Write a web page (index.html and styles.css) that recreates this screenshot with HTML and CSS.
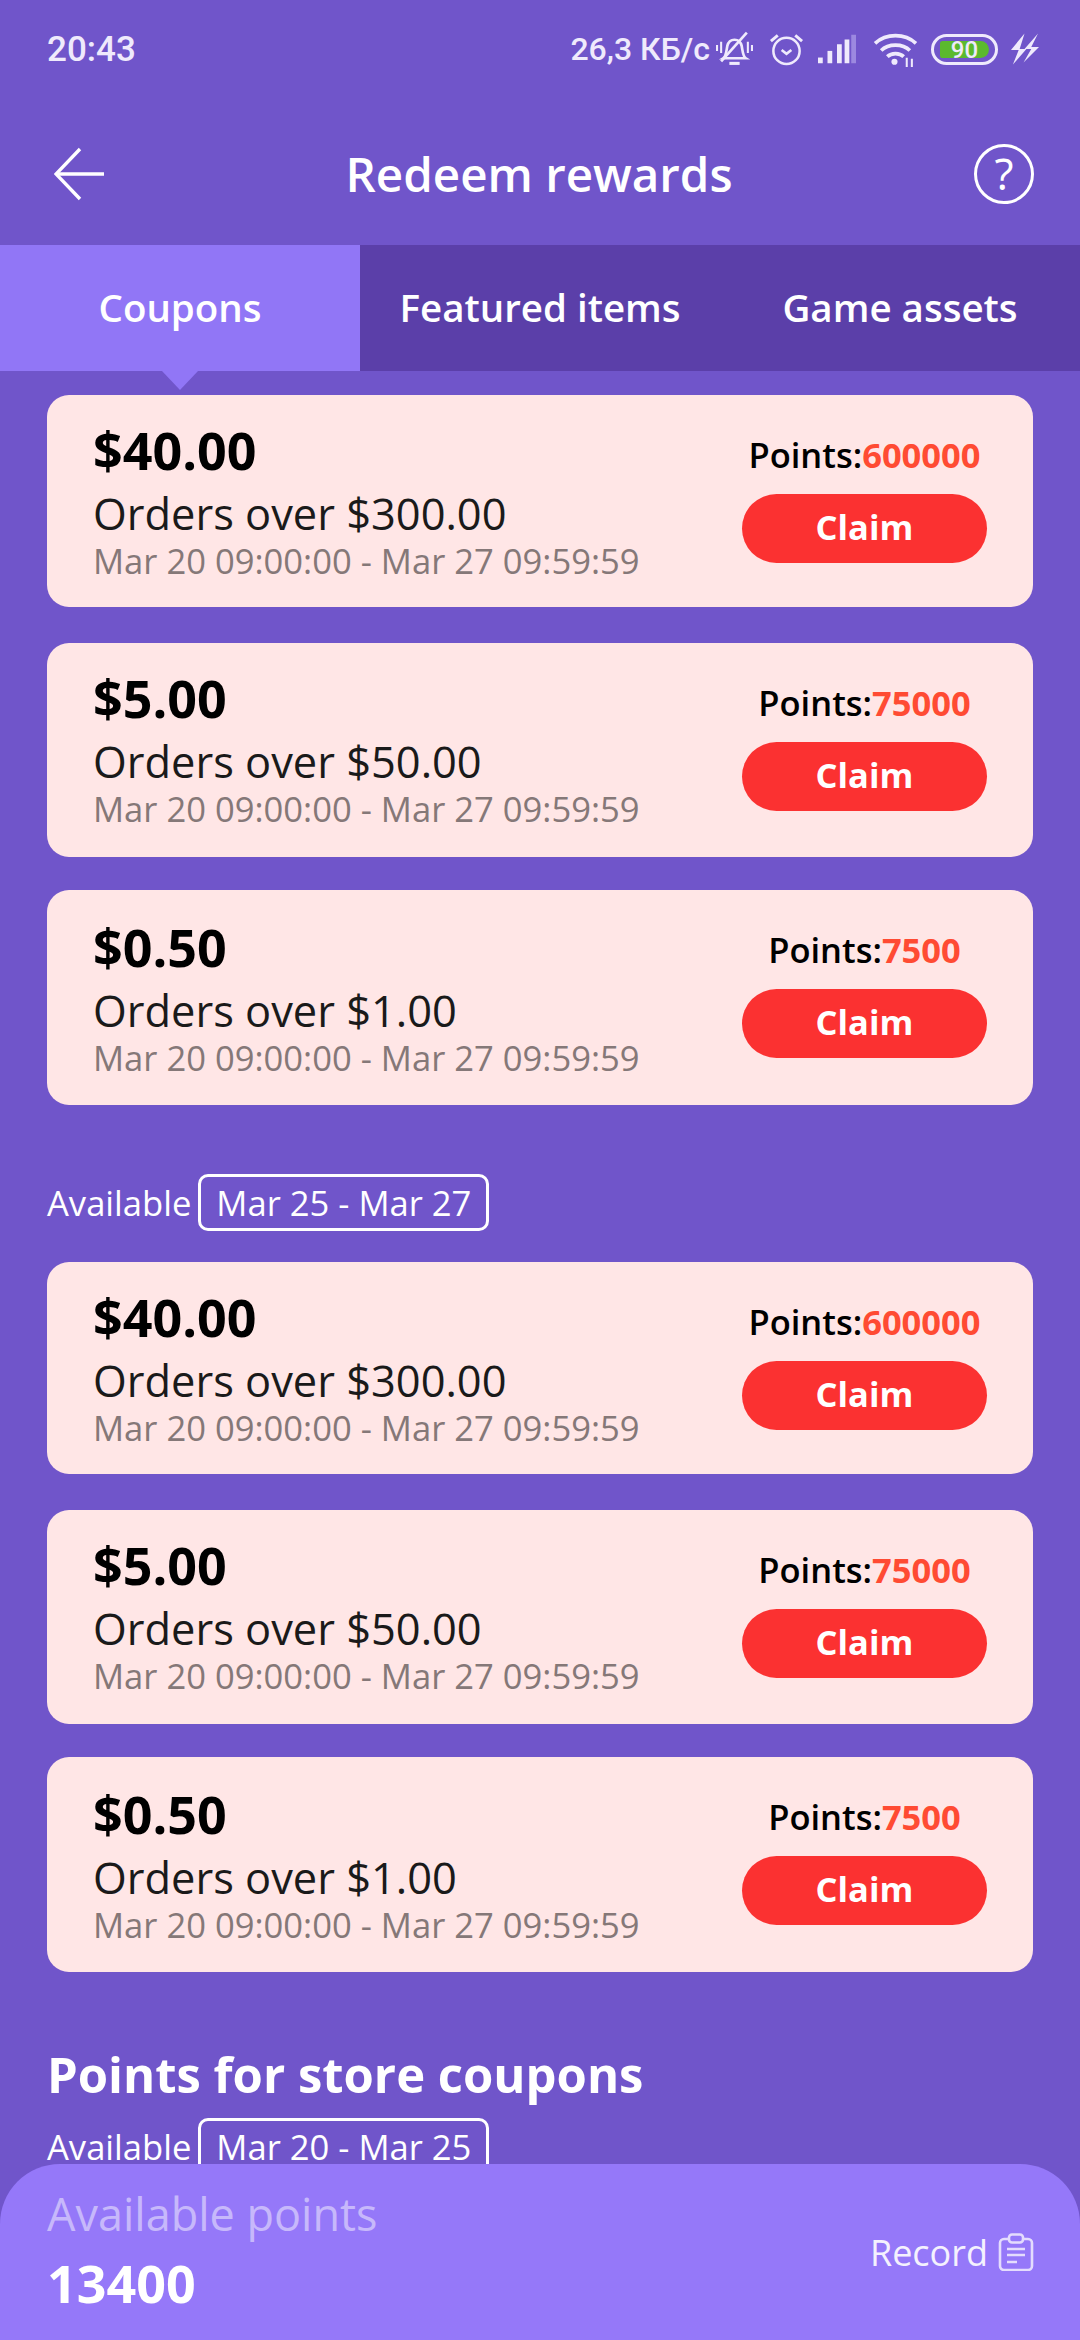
FILE: index.html
```html
<!DOCTYPE html>
<html lang="en">
<head>
    <meta charset="UTF-8">
    <meta name="viewport" content="width=device-width, initial-scale=1.0">
    <title>Redeem rewards</title>
    <link rel="stylesheet" href="styles.css">
</head>
<body>
    <div class="screen">
        <div class="status-bar">
            <span class="status-time">20:43</span>
            <div class="status-right">
                <span class="status-speed">26,3 КБ/с</span>
                <svg class="ic-bell" width="37" height="36" viewBox="0 0 36 34" fill="none" stroke="#efeafc" stroke-width="2.6">
                    <path d="M7 26c3-2 3-7 4-12 1-4 4-6 7-6s6 2 7 6c1 5 1 10 4 12z"/>
                    <path d="M5 29L30 1" stroke-width="2.6"/>
                    <path d="M1 13v6M5 10v11M31 10v11M35 13v6" stroke-width="2"/>
                    <path d="M13 31h10" stroke-width="3"/>
                </svg>
                <svg class="ic-alarm" width="35" height="34" viewBox="0 0 36 34" fill="none" stroke="#efeafc" stroke-width="2.6">
                    <circle cx="18" cy="19" r="13.500"/>
                    <path d="M13 18l5 4 5-4"/>
                    <path d="M2 9l7-6M34 9l-7-6" stroke-width="3"/>
                </svg>
                <svg class="ic-signal" width="38" height="30" viewBox="0 0 40 30">
                    <rect x="0" y="24" width="5" height="6" fill="#efeafc"/>
                    <rect x="10" y="17" width="5" height="13" fill="#efeafc"/>
                    <rect x="20" y="10" width="5" height="20" fill="#efeafc"/>
                    <rect x="28" y="5" width="5" height="25" fill="#efeafc"/>
                    <rect x="35" y="0" width="5" height="30" fill="#9c89e0"/>
                </svg>
                <svg class="ic-wifi" width="45" height="35" viewBox="0 0 44 34" fill="none" stroke="#efeafc" stroke-width="3.600">
                    <path d="M2 11c11-10 29-10 40 0"/>
                    <path d="M8 18c7-7 21-7 28 0"/>
                    <path d="M14 24c4-4 12-4 16 0"/>
                    <circle cx="21" cy="29" r="3" fill="#efeafc" stroke="none"/>
                    <path d="M33 25v9M38 26v8" stroke-width="2"/>
                </svg>
                <div class="battery"><span class="battery-fill">90</span></div>
                <svg class="ic-bolt" width="29" height="32" viewBox="0 0 30 32" fill="#efeafc">
                    <path d="M15 0L1 17h8L3 32l14-16h-7z"/>
                    <path d="M29 0L15 16h7L14 30l16-16h-8z"/>
                </svg>
            </div>
        </div>

        <div class="top-bar">
            <svg class="back-icon" width="50" height="54" viewBox="0 0 50 54" fill="none" stroke="#fff" stroke-width="3.400">
                <path d="M26 2L2 27l24 25"/>
                <path d="M2 27h48"/>
            </svg>
            <h1 class="page-title">Redeem rewards</h1>
            <div class="help-icon">?</div>
        </div>

        <div class="tabs">
            <div class="tab active">Coupons</div>
            <div class="tab">Featured items</div>
            <div class="tab">Game assets</div>
        </div>

        <div class="content">
            <div class="card-list">
                <div class="coupon">
                    <div class="coupon-info">
                        <div class="amount">$40.00</div>
                        <div class="orders">Orders over $300.00</div>
                        <div class="dates">Mar 20 09:00:00 - Mar 27 09:59:59</div>
                    </div>
                    <div class="coupon-action">
                        <div class="points">Points:<span>600000</span></div>
                        <button class="claim" type="button">Claim</button>
                    </div>
                </div>
                <div class="coupon">
                    <div class="coupon-info">
                        <div class="amount">$5.00</div>
                        <div class="orders">Orders over $50.00</div>
                        <div class="dates">Mar 20 09:00:00 - Mar 27 09:59:59</div>
                    </div>
                    <div class="coupon-action">
                        <div class="points">Points:<span>75000</span></div>
                        <button class="claim" type="button">Claim</button>
                    </div>
                </div>
                <div class="coupon">
                    <div class="coupon-info">
                        <div class="amount">$0.50</div>
                        <div class="orders">Orders over $1.00</div>
                        <div class="dates">Mar 20 09:00:00 - Mar 27 09:59:59</div>
                    </div>
                    <div class="coupon-action">
                        <div class="points">Points:<span>7500</span></div>
                        <button class="claim" type="button">Claim</button>
                    </div>
                </div>
            </div>

            <div class="available">Available <span class="date-box">Mar 25 - Mar 27</span></div>

            <div class="card-list">
                <div class="coupon">
                    <div class="coupon-info">
                        <div class="amount">$40.00</div>
                        <div class="orders">Orders over $300.00</div>
                        <div class="dates">Mar 20 09:00:00 - Mar 27 09:59:59</div>
                    </div>
                    <div class="coupon-action">
                        <div class="points">Points:<span>600000</span></div>
                        <button class="claim" type="button">Claim</button>
                    </div>
                </div>
                <div class="coupon">
                    <div class="coupon-info">
                        <div class="amount">$5.00</div>
                        <div class="orders">Orders over $50.00</div>
                        <div class="dates">Mar 20 09:00:00 - Mar 27 09:59:59</div>
                    </div>
                    <div class="coupon-action">
                        <div class="points">Points:<span>75000</span></div>
                        <button class="claim" type="button">Claim</button>
                    </div>
                </div>
                <div class="coupon">
                    <div class="coupon-info">
                        <div class="amount">$0.50</div>
                        <div class="orders">Orders over $1.00</div>
                        <div class="dates">Mar 20 09:00:00 - Mar 27 09:59:59</div>
                    </div>
                    <div class="coupon-action">
                        <div class="points">Points:<span>7500</span></div>
                        <button class="claim" type="button">Claim</button>
                    </div>
                </div>
            </div>

            <h2 class="section-title">Points for store coupons</h2>
            <div class="available next">Available <span class="date-box">Mar 20 - Mar 25</span></div>
        </div>

        <div class="points-bar">
            <div>
                <div class="points-label">Available points</div>
                <div class="points-value">13400</div>
            </div>
            <div class="record">
                Record
                <svg width="36" height="38" viewBox="0 0 36 38" fill="none" stroke="#e4dcfd" stroke-width="2.6">
                    <rect x="2" y="6" width="32" height="31" rx="4"/>
                    <rect x="11" y="1.500" width="14" height="8" rx="3" fill="#9578f9"/>
                    <path d="M9 16h18M9 22h18M9 29h10"/>
                </svg>
            </div>
        </div>
    </div>
</body>
</html>
```

FILE: styles.css
```css
* {
    box-sizing: border-box;
}
body {
    margin: 0;
    font-family: "Open Sans", Arial, sans-serif;
    background: #7055ca;
}
.screen {
    position: relative;
    width: 1080px;
    height: 2340px;
    overflow: hidden;
    background: #7055ca;
    color: #fff;
}

.status-bar {
    display: flex;
    justify-content: space-between;
    align-items: center;
    height: 96px;
    padding: 2px 41px 0 47px;
    font-family: Roboto, Arial, sans-serif;
    font-weight: 500;
    color: #efeafc;
}
.status-time {
    font-size: 35px;
}
.status-right {
    display: flex;
    align-items: center;
}
.status-speed {
    font-size: 32px;
}
.ic-bell {
    margin-left: 6px;
}
.ic-alarm {
    margin-left: 16px;
}
.ic-signal {
    margin-left: 14px;
}
.ic-wifi {
    margin-left: 17px;
}
.battery {
    display: flex;
    align-items: center;
    width: 67px;
    height: 31px;
    margin-left: 13px;
    padding: 4px 6px;
    border: 3px solid #efeafc;
    border-radius: 16px;
}
.battery-fill {
    width: 50px;
    height: 100%;
    background: #5bb92e;
    border-radius: 3px 9px 9px 3px;
    font-size: 24px;
    line-height: 19px;
    text-align: center;
}
.ic-bolt {
    margin-left: 12px;
}

.top-bar {
    display: flex;
    justify-content: space-between;
    align-items: center;
    height: 149px;
    padding: 6px 46px 0 54px;
}
.page-title {
    margin: 0;
    font-size: 47.5px;
    font-weight: 600;
}
.help-icon {
    width: 60px;
    height: 60px;
    border: 3.5px solid #fff;
    border-radius: 50%;
    font-size: 44px;
    line-height: 52px;
    text-align: center;
}

.tabs {
    display: flex;
    height: 126px;
    background: #5b3fa9;
}
.tab {
    position: relative;
    flex: 1;
    font-size: 38.5px;
    font-weight: 600;
    line-height: 124px;
    text-align: center;
}
.tab.active {
    background: #9176f6;
}
.tab.active::after {
    content: "";
    position: absolute;
    left: 162px;
    top: 126px;
    border-left: 18px solid transparent;
    border-right: 18px solid transparent;
    border-top: 19px solid #9176f6;
}

.content {
    padding: 24px 47px 0;
}
.coupon {
    display: flex;
    justify-content: space-between;
    height: 214px;
    margin-top: 33px;
    padding: 24px 46px 0;
    background: #ffe6e6;
    border-radius: 22px;
}
.coupon:first-child {
    height: 212px;
    margin-top: 0;
}
.coupon:nth-child(2) {
    margin-top: 36px;
}
.coupon:nth-child(3) {
    height: 215px;
}
.coupon-info {
    margin-top: -2px;
}
.coupon:nth-child(3) .coupon-info {
    padding-top: 2px;
}
.amount {
    font-size: 52px;
    font-weight: 700;
    line-height: 66px;
    color: #000;
}
.orders {
    font-size: 43.4px;
    line-height: 62px;
    color: #1a1a1a;
}
.dates {
    font-size: 34.6px;
    line-height: 32px;
    color: #857878;
}
.coupon-action {
    display: flex;
    flex-direction: column;
    align-items: center;
    width: 245px;
}
.points {
    font-size: 34.5px;
    font-weight: 600;
    line-height: 64px;
    margin-top: 4px;
    color: #000;
    white-space: nowrap;
}
.points span {
    font-size: 34.5px;
    font-weight: 700;
    color: #ff4b33;
}
.claim {
    width: 245px;
    height: 69px;
    margin-top: 7px;
    padding: 0 0 5px;
    border: none;
    border-radius: 35px;
    background: #fb3131;
    color: #fff;
    font-family: "Open Sans", Arial, sans-serif;
    font-size: 34.5px;
    font-weight: 700;
}

.available {
    display: flex;
    align-items: center;
    gap: 7px;
    margin-top: 69px;
    margin-bottom: 31px;
    font-size: 34.6px;
}
.date-box {
    height: 57px;
    padding: 0 15px;
    border: 3px solid #fff;
    border-radius: 10px;
    line-height: 51px;
}
.section-title {
    margin: 69px 0 0;
    font-size: 49px;
    font-weight: 700;
    line-height: 66px;
}
.available.next {
    margin-top: 11px;
}

.points-bar {
    position: absolute;
    left: 0;
    right: 0;
    bottom: 0;
    display: flex;
    justify-content: space-between;
    align-items: center;
    height: 176px;
    padding: 0 46px 0 47px;
    background: #9578f9;
    border-radius: 60px 60px 0 0;
}
.points-label {
    font-size: 45px;
    font-weight: 500;
    line-height: 62px;
    color: #c7b8fb;
}
.points-value {
    font-size: 52px;
    font-weight: 700;
    line-height: 76px;
}
.record {
    display: flex;
    align-items: center;
    gap: 10px;
    font-size: 36px;
    color: #f4f1fe;
}
```
